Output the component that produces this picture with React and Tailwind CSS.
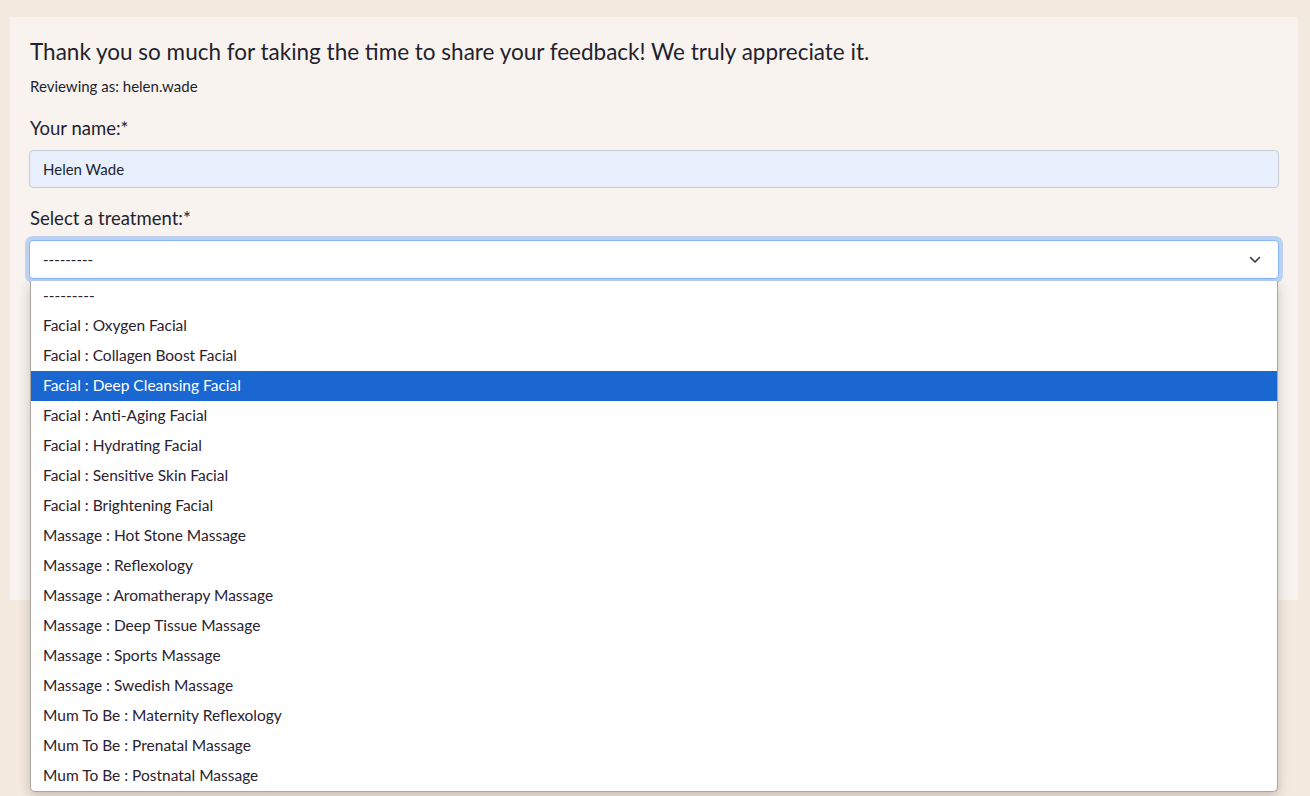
const treatments = [
  "---------",
  "Facial : Oxygen Facial",
  "Facial : Collagen Boost Facial",
  "Facial : Deep Cleansing Facial",
  "Facial : Anti-Aging Facial",
  "Facial : Hydrating Facial",
  "Facial : Sensitive Skin Facial",
  "Facial : Brightening Facial",
  "Massage : Hot Stone Massage",
  "Massage : Reflexology",
  "Massage : Aromatherapy Massage",
  "Massage : Deep Tissue Massage",
  "Massage : Sports Massage",
  "Massage : Swedish Massage",
  "Mum To Be : Maternity Reflexology",
  "Mum To Be : Prenatal Massage",
  "Mum To Be : Postnatal Massage",
];

const App = () => {
  const selected = "Facial : Deep Cleansing Facial";

  return (
    <div className="min-h-screen bg-[#f5eadf] pt-[17px] pl-[10px] pr-[12px] text-[#231f2e] font-['Lato',sans-serif]">
      <div className="h-[583px] bg-[#f8f3ef] px-[19px] pt-[21px]">
        <h2 className="text-[22.5px] leading-[28px] pl-[1px]">
          Thank you so much for taking the time to share your feedback! We truly appreciate it.
        </h2>
        <p className="mt-[10px] text-[15px] leading-[20px] pl-[1px]">Reviewing as: helen.wade</p>

        {/* Name */}
        <label className="block mt-[20px] text-[18.5px] leading-[24px] pl-[1px]">Your name:*</label>
        <div className="mt-[10px] h-[38px] rounded-[4px] border border-[#c9cdd3] bg-[#e8f0fe] flex items-center px-[13px] text-[15px]">
          Helen Wade
        </div>

        {/* Treatment */}
        <label className="block mt-[18px] text-[18.5px] leading-[24px] pl-[1px]">Select a treatment:*</label>
        <div className="relative mt-[10px]">
          <div className="h-[39px] rounded-[4px] border border-[#86b7fe] bg-white shadow-[0_0_0_4px_rgba(13,110,253,0.25)] flex items-center justify-between px-[13px] text-[15px]">
            <span>---------</span>
            <svg width="12" height="8" viewBox="0 0 12 8" fill="none" className="mr-[4px]">
              <path d="M1.5 1.5 6 6l4.5-4.5" stroke="#343a40" strokeWidth="1.6" strokeLinecap="round" strokeLinejoin="round" />
            </svg>
          </div>

          {/* Open dropdown list */}
          <ul className="absolute left-[1px] right-[1px] top-[41px] z-10 bg-white border border-[#a9a6a2] border-t-0 rounded-b-[5px] shadow-[0_4px_12px_rgba(60,45,30,0.25)]">
            {treatments.map((t) => (
              <li
                key={t}
                className={`h-[30px] flex items-center px-[12px] text-[15.5px] ${
                  t === selected ? "bg-[#1a67d2] text-white" : "text-[#2b2230]"
                }`}
              >
                {t}
              </li>
            ))}
          </ul>
        </div>
      </div>
    </div>
  );
};

export default App;
